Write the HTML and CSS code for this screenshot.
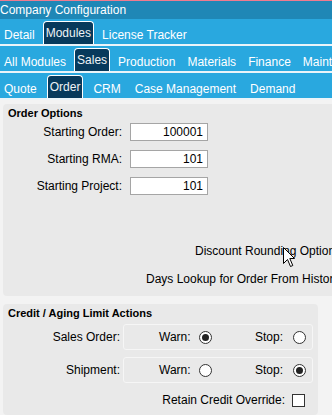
FILE: index.html
```html
<!DOCTYPE html>
<html>

<head>
    <title>Company Configuration</title>
    <meta name="viewport" content="width=device-width, initial-scale=1">
    <link rel="stylesheet" href="styles.css">
</head>

<body>
    <div class="titlebar">Company Configuration</div>

    <div class="tabrow">
        <span class="tab">Detail</span>
        <span class="tab active">Modules</span>
        <span class="tab">License Tracker</span>
    </div>
    <div class="tabrow">
        <span class="tab">All Modules</span>
        <span class="tab active">Sales</span>
        <span class="tab">Production</span>
        <span class="tab">Materials</span>
        <span class="tab">Finance</span>
        <span class="tab">Maintenance</span>
    </div>
    <div class="tabrow wide">
        <span class="tab">Quote</span>
        <span class="tab active">Order</span>
        <span class="tab">CRM</span>
        <span class="tab">Case Management</span>
        <span class="tab">Demand</span>
    </div>

    <div class="content">
        <section class="panel order-options">
            <h2>Order Options</h2>
            <div class="fields">
                <label>Starting Order:</label>
                <input type="text" value="100001">
                <label>Starting RMA:</label>
                <input type="text" value="101">
                <label>Starting Project:</label>
                <input type="text" value="101">
            </div>
            <div class="extra discount">Discount Rounding Options</div>
            <div class="extra days">Days Lookup for Order From History</div>
        </section>

        <section class="panel credit">
            <h2>Credit / Aging Limit Actions</h2>
            <div class="limits">
                <label>Sales Order:</label>
                <div class="choice">
                    <span class="opt warn">Warn: <span class="radio on"></span></span>
                    <span class="opt stop">Stop: <span class="radio"></span></span>
                </div>
                <label>Shipment:</label>
                <div class="choice">
                    <span class="opt warn">Warn: <span class="radio"></span></span>
                    <span class="opt stop">Stop: <span class="radio on"></span></span>
                </div>
            </div>
            <div class="retain">
                <span>Retain Credit Override:</span>
                <span class="checkbox"></span>
            </div>
        </section>
    </div>

    <svg class="cursor" width="13" height="21" viewBox="0 0 13 21">
        <path d="M0.5 0.5 L0.5 16.5 L4.5 12.5 L7.5 19.5 L9.8 18.5 L6.8 11.5 L11.5 11.5 Z" fill="#fff" stroke="#000" stroke-width="1"/>
    </svg>
</body>

</html>
```

FILE: styles.css
```css
html, body {
    overflow: hidden;
}

body {
    margin: 0;
    padding: 0;
    background-color: #f3f3f3;
    color: #000;
    font-family: "Liberation Sans", Arial, sans-serif;
    font-size: 12px;
    position: relative;
    width: 332px;
    height: 415px;
}

.titlebar {
    border-top: 1px solid #ef7b8f;
    background-color: #1f87b6;
    color: #fff;
    height: 18px;
    line-height: 18px;
    white-space: nowrap;
}

.tabrow {
    display: flex;
    gap: 4px;
    height: 23px;
    padding-top: 2px;
    background-color: #29a8df;
    border-bottom: 2px solid #eaf4f9;
    white-space: nowrap;
}

.tabrow.wide {
    gap: 6px;
}

.tab {
    display: flex;
    align-items: center;
    padding: 5px 4px 0;
    color: #fff;
    line-height: 18px;
}

.tab.active {
    padding: 0 2px;
    background-color: #073a5c;
    border: 1px solid #fff;
    border-bottom: none;
    border-radius: 4px 4px 0 0;
    color: #eef3f6;
}

.content {
    padding: 4px 0 0 3px;
}

.panel {
    background-color: #e9e9e9;
    border-radius: 4px;
}

.panel h2 {
    margin: 0;
    padding: 2px 0 0 5px;
    font-size: 11px;
    line-height: 14px;
    font-weight: bold;
}

.order-options {
    width: 400px;
    height: 192px;
}

.fields {
    display: grid;
    grid-template-columns: 119px 78px;
    grid-auto-rows: 18px;
    column-gap: 8px;
    row-gap: 9px;
    align-items: center;
    margin-top: 3px;
}

.fields label {
    text-align: right;
}

.fields input {
    box-sizing: border-box;
    width: 78px;
    height: 18px;
    margin: 0;
    padding: 0 4px;
    border: 1px solid #a5a5a5;
    background-color: #fff;
    font-family: "Liberation Sans", Arial, sans-serif;
    font-size: 12px;
    text-align: right;
    color: #000;
}

.extra {
    line-height: 14px;
    white-space: nowrap;
}

.discount {
    margin-top: 49px;
    padding-left: 192px;
}

.days {
    margin-top: 14px;
    padding-left: 143px;
}

.credit {
    width: 315px;
    margin-top: 8px;
    padding-bottom: 6px;
}

.limits {
    display: grid;
    grid-template-columns: 117px 190px;
    grid-auto-rows: 26px;
    column-gap: 3px;
    row-gap: 7px;
    align-items: center;
    margin-top: 4px;
}

.limits label {
    text-align: right;
}

.choice {
    box-sizing: border-box;
    height: 26px;
    display: flex;
    align-items: center;
    border: 1px solid #f6f6f6;
    border-radius: 3px;
    padding: 0 6px 0 35px;
}

.opt {
    display: flex;
    align-items: center;
    gap: 8px;
}

.opt.stop {
    margin-left: auto;
    gap: 10px;
}

.radio {
    box-sizing: border-box;
    position: relative;
    width: 13px;
    height: 13px;
    border: 1px solid #333;
    border-radius: 50%;
    background-color: #fff;
}

.radio.on::after {
    content: "";
    position: absolute;
    left: 2px;
    top: 2px;
    width: 7px;
    height: 7px;
    border-radius: 50%;
    background-color: #222;
}

.retain {
    display: flex;
    align-items: center;
    justify-content: flex-end;
    gap: 7px;
    height: 18px;
    margin-top: 8px;
    padding-right: 13px;
}

.checkbox {
    box-sizing: border-box;
    width: 13px;
    height: 13px;
    border: 1px solid #333;
    background-color: #fff;
}

.cursor {
    position: absolute;
    left: 283px;
    top: 247px;
}
```
